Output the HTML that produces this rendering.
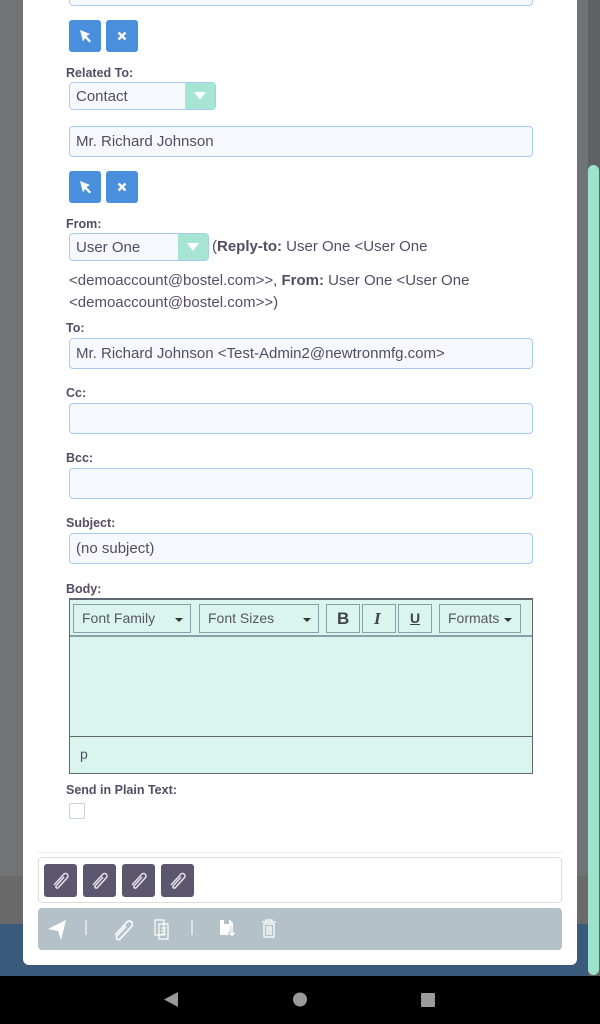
<!DOCTYPE html>
<html><head><meta charset="utf-8"><style>
*{box-sizing:border-box;margin:0;padding:0}
body{width:600px;height:1024px;position:relative;overflow:hidden;background:#717476;font-family:"Liberation Sans",sans-serif;color:#534d64}
.a{position:absolute}
.modal{left:23px;top:-10px;width:554px;height:975px;background:#fff;border-radius:0 0 6px 6px}
.lbl{position:absolute;left:66px;font-size:12.5px;font-weight:bold;color:#534d64}
.inp{position:absolute;left:69px;width:464px;height:31px;background:#f5f8fd;border:1px solid #a9cbf1;border-radius:4px;font-size:15px;padding:6px 0 0 6px;color:#534d64;white-space:nowrap}
.btn{position:absolute;width:32px;height:32px;background:#4a8fdc;border-radius:3px}
.sel{position:absolute;left:69px;height:28px;background:#f5f8fd;border:1px solid #a9cbf1;border-radius:4px;font-size:15px;padding:5px 0 0 6px}
.sel .ar{position:absolute;right:0;top:0;width:30px;height:26px;background:#a5e5d2}
.sel .ar:after{content:"";position:absolute;left:9px;top:9px;border-left:6px solid transparent;border-right:6px solid transparent;border-top:8px solid #fff}
.tb{position:absolute;top:4px;height:29px;border:1px solid #8aa0a8;font-size:14px;color:#595762;padding:5px 0 0 8px}
.car{position:absolute;right:7px;top:13px;border-left:4px solid transparent;border-right:4px solid transparent;border-top:4px solid #333}
.att{position:absolute;top:6px;width:33px;height:33px;background:#5c566f;border-radius:3px}
</style></head><body>
<div class="a" style="left:0;top:876px;width:600px;height:48px;background:#6a6a6a"></div>
<div class="a" style="left:0;top:924px;width:600px;height:52px;background:#3a5a7c"></div>
<div class="a" style="left:588px;top:0;width:12px;height:976px;background:#5f6264"></div>
<div class="a" style="left:588px;top:165px;width:11px;height:810px;background:#9de2cc;border-radius:6px"></div>
<div class="a modal"></div>

<div class="inp" style="top:-25px"></div>
<div class="btn" style="left:69px;top:20px"><svg width="32" height="32"><path d="M11 10 L21 14 L17.5 16 L22 21 L20.5 22.5 L16 18 L14 21.5 Z" fill="#fff"/></svg></div>
<div class="btn" style="left:106px;top:20px"><svg width="32" height="32"><path d="M12.5 12.5 L19.5 19.5 M19.5 12.5 L12.5 19.5" stroke="#fff" stroke-width="2.4"/></svg></div>
<div class="lbl" style="top:66px">Related To:</div>
<div class="sel" style="top:82px;width:147px">Contact<div class="ar"></div></div>
<div class="inp" style="top:126px">Mr. Richard Johnson</div>
<div class="btn" style="left:69px;top:171px"><svg width="32" height="32"><path d="M11 10 L21 14 L17.5 16 L22 21 L20.5 22.5 L16 18 L14 21.5 Z" fill="#fff"/></svg></div>
<div class="btn" style="left:106px;top:171px"><svg width="32" height="32"><path d="M12.5 12.5 L19.5 19.5 M19.5 12.5 L12.5 19.5" stroke="#fff" stroke-width="2.4"/></svg></div>
<div class="lbl" style="top:217px">From:</div>
<div class="sel" style="top:233px;width:140px">User One<div class="ar"></div></div>
<div class="a" style="left:212px;top:238px;font-size:15px;white-space:nowrap">(<b>Reply-to:</b> User One &lt;User One</div>
<div class="a" style="left:69px;top:270px;font-size:15px;white-space:nowrap;line-height:22px">&lt;demoaccount@bostel.com&gt;&gt;, <b>From:</b> User One &lt;User One<br>&lt;demoaccount@bostel.com&gt;&gt;)</div>
<div class="lbl" style="top:321px">To:</div>
<div class="inp" style="top:338px">Mr. Richard Johnson &lt;Test-Admin2@newtronmfg.com&gt;</div>
<div class="lbl" style="top:386px">Cc:</div>
<div class="inp" style="top:403px"></div>
<div class="lbl" style="top:451px">Bcc:</div>
<div class="inp" style="top:468px"></div>
<div class="lbl" style="top:516px">Subject:</div>
<div class="inp" style="top:533px">(no subject)</div>
<div class="lbl" style="top:582px">Body:</div>
<div class="a" style="left:69px;top:598px;width:464px;height:176px;background:#d9f5ee;border:1px solid #5f6870;border-top:2px solid #5f6870">
  <div class="tb" style="left:3px;width:118px">Font Family<span class="car"></span></div>
  <div class="tb" style="left:129px;width:120px">Font Sizes<span class="car"></span></div>
  <div class="tb" style="left:256px;width:34px;font-weight:bold;font-size:17px;padding:4px 0 0 10px;color:#444">B</div>
  <div class="tb" style="left:292px;width:34px;font-style:italic;font-weight:bold;font-size:17px;font-family:'Liberation Serif',serif;padding:4px 0 0 11px;color:#444">I</div>
  <div class="tb" style="left:328px;width:34px;text-decoration:underline;font-weight:bold;padding:5px 0 0 11px;color:#444">U</div>
  <div class="tb" style="left:369px;width:82px">Formats<span class="car" style="right:8px"></span></div>
  <div class="a" style="left:0;top:35px;width:462px;height:2px;background:#8aa0a8"></div>
  <div class="a" style="left:0;top:136px;width:462px;height:1px;background:#5f6870"></div>
  <div class="a" style="left:10px;top:146px;font-size:14px">p</div>
</div>
<div class="lbl" style="top:783px">Send in Plain Text:</div>
<div class="a" style="left:69px;top:803px;width:16px;height:16px;border:1px solid #c9d1d9;border-radius:2px;background:#fff"></div>
<div class="a" style="left:38px;top:852px;width:524px;height:1px;background:#eee"></div>
<div class="a" style="left:38px;top:857px;width:524px;height:46px;border:1px solid #ddd;border-radius:4px">
  <div class="att" style="left:5px"></div><div class="att" style="left:44px"></div><div class="att" style="left:83px"></div><div class="att" style="left:122px"></div>
</div>
<svg class="a" style="left:38px;top:857px" width="200" height="46"><g fill="none" stroke="#e6e3ee" stroke-width="1.5">
<path id="pc" d="M16 28 L26 17 A2.5 2.5 0 0 1 29.5 20.5 L20 31 A1.5 1.5 0 0 1 18 29 L26 20"/>
<use href="#pc" x="39"/><use href="#pc" x="78"/><use href="#pc" x="117"/></g></svg>
<div class="a" style="left:38px;top:908px;width:524px;height:42px;background:#b4c1c8;border-radius:4px"></div>
<svg class="a" style="left:38px;top:908px" width="260" height="42">
<path d="M10 21 L28 12 L23 32 L20 23 Z" fill="#fff"/>
<path d="M48 12 V27" stroke="#fff" stroke-width="1"/>
<path d="M77 27 L89 14 A3 3 0 0 1 93.5 18.5 L82 31 A2 2 0 0 1 79 28 L88 18" fill="none" stroke="#fff" stroke-width="1.6"/>
<path d="M117 12 h9 v15 h-9 z M121 16 h9 v15 h-9 z" fill="#b4c1c8" stroke="#fff" stroke-width="1.2"/>
<path d="M123 20 h5 M123 23 h5 M123 26 h5" stroke="#fff"/>
<path d="M154 12 V27" stroke="#fff" stroke-width="1"/>
<path d="M182 12 h10 l3 3 v12 h-13 z" fill="#fff"/><path d="M186 12 h5 v4 h-5z" fill="#b4c1c8"/>
<path d="M194 18 v9 M191 24 l3 4 l3 -4" stroke="#b4c1c8" stroke-width="3" fill="none"/><path d="M194 18 v9 M191.5 24.5 l2.5 3 l2.5 -3" stroke="#fff" stroke-width="1.5" fill="none"/>
<path d="M224 14 h14 M228 14 v-2 h6 v2 M226 16 h10 v13 h-10 z M229 18 v9 M231 18 v9 M233 18 v9" stroke="#fff" stroke-width="1.3" fill="none"/>
</svg>
<div class="a" style="left:0;top:976px;width:600px;height:48px;background:#000"></div>
<svg class="a" style="left:0;top:976px" width="600" height="48">
<path d="M178 16 V31 L164 23.5 Z" fill="#9a9a9a"/>
<circle cx="300" cy="23.5" r="7" fill="#9a9a9a"/>
<rect x="421" y="17" width="14" height="14" rx="1" fill="#9a9a9a"/>
</svg>
</body></html>
